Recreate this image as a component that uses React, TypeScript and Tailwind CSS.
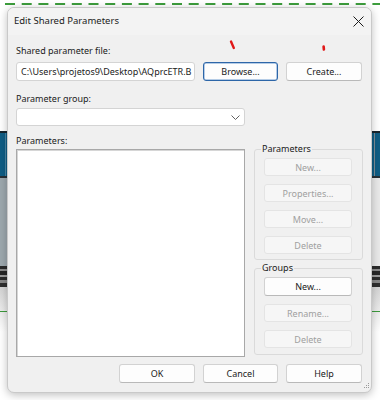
const font = "font-['Noto_Sans','Open_Sans',sans-serif]";

type BtnProps = { label: string; width: string; disabled?: boolean; primary?: boolean };

const Btn = ({ label, width, disabled, primary }: BtnProps) => (
  <button
    className={
      disabled
        ? `${width} h-[18px] shrink-0 rounded-[3px] border border-[#e4e4e4] bg-[#f6f6f6] text-[9px] leading-none text-[#a0a0a0]`
        : primary
          ? `${width} h-[19px] shrink-0 rounded-[3px] border border-[#2d66a8] bg-[#fdfdfd] text-[9px] leading-none text-[#1b1b1b] shadow-[inset_0_0_0_0.5px_#6f9bd0]`
          : `${width} h-[19px] shrink-0 rounded-[3px] border border-[#d2d2d2] border-b-[#b9b9b9] bg-[#fdfdfd] text-[9px] leading-none text-[#1b1b1b]`
    }
  >
    {label}
  </button>
);

const GroupBox = ({ title, children, className }: { title: string; children: React.ReactNode; className: string }) => (
  <fieldset className={`w-[109px] rounded-[3px] border border-[#dadada] ${className}`}>
    <legend className="-ml-[3px] px-[1px] text-[9px] leading-[12px] text-[#1b1b1b]">{title}</legend>
    {children}
  </fieldset>
);

export default function App() {
  return (
    <div className={`relative h-[400px] w-[380px] overflow-hidden bg-white ${font}`}>
      {/* canvas behind the dialog */}
      <div className="flex h-full flex-col">
        <div className="h-[3px]" />
        <svg width="380" height="2" className="block">
          <line x1="5" y1="1" x2="380" y2="1" stroke="#3d9d3d" strokeWidth="2" strokeDasharray="10 6.7" />
        </svg>
        <div className="h-[126px]" />
        <div className="h-[2px] bg-[#17252e]" />
        <div className="flex h-[43px] justify-between bg-[#0f5d84]">
          <div className="ml-[5px] w-[1px] bg-[#4a87a6]" />
          <div className="mr-[5px] w-[1px] bg-[#7d8d96]" />
        </div>
        <div className="h-[2px] bg-[#283036]" />
        <div className="flex h-[88px]">
          <div className="w-[190px] bg-[#9da8ae]" />
          <div className="flex-1 bg-[#e9e9e9]" />
        </div>
        <div className="h-[3px] bg-[#2a2a2a]" />
        <div className="h-[2px] bg-[#8a8a8a]" />
        <div className="h-[4px] bg-[#262626]" />
        <div className="h-[2px] bg-[#9c9c9c]" />
        <div className="h-[3px] bg-[#2c2c2c]" />
        <div className="h-[3px] bg-[#878787]" />
        <div className="h-[4px] bg-[#2e2e2e]" />
        <div className="h-[24px] bg-gradient-to-b from-[#d4d4d4] to-[#ececec]" />
        <div className="h-[1px] bg-[#3c9a3c]" />
        <div className="h-[20px] bg-gradient-to-b from-[#ececec] to-white" />
      </div>

      {/* dialog window */}
      <div className="absolute left-[7px] top-[7px] flex h-[386px] w-[365px] flex-col overflow-hidden rounded-[7px] border border-[#c9c9c9] bg-[#f0f0f0] shadow-[0_2px_8px_rgba(0,0,0,0.25)]">
        <div className="flex h-[27px] shrink-0 items-center justify-between bg-[#f3f3f3] pl-[6px] pr-[7px]">
          <span className="text-[9.5px] text-[#1b1b1b]">Edit Shared Parameters</span>
          <svg width="11" height="11" viewBox="0 0 11 11">
            <path d="M0.5 0.5 L10.5 10.5 M10.5 0.5 L0.5 10.5" stroke="#1b1b1b" strokeWidth="1" />
          </svg>
        </div>

        <div className="flex flex-col pl-[8px] text-[#1b1b1b]">
          <div className="mt-[10px] h-[12px] text-[9px] leading-[12px]">Shared parameter file:</div>
          <div className="mt-[5px] flex gap-[8px]">
            <div className="flex h-[19px] w-[179px] items-center overflow-hidden whitespace-nowrap rounded-[3px] border border-[#d4d4d4] bg-white pl-[4px] text-[9px]">
              C:\Users\projetos9\Desktop\AQprcETR.B
            </div>
            <Btn label="Browse..." width="w-[75px]" primary />
            <Btn label="Create..." width="w-[76px]" />
          </div>

          <div className="mt-[12px] h-[12px] text-[9px] leading-[12px]">Parameter group:</div>
          <div className="mt-[3px] flex h-[18px] w-[229px] items-center justify-end rounded-[3px] border border-[#d4d4d4] bg-white pr-[4px]">
            <svg width="9" height="5" viewBox="0 0 9 5">
              <path d="M0.5 0.5 L4.5 4.5 L8.5 0.5" fill="none" stroke="#606060" strokeWidth="1" />
            </svg>
          </div>

          <div className="mt-[9px] flex">
            <div className="flex w-[229px] flex-col">
              <div className="h-[12px] text-[9px] leading-[12px]">Parameters:</div>
              <div className="mt-[2px] h-[208px] border border-[#a8a8a8] bg-white shadow-[inset_1px_1px_0_#d6d6d6]" />
            </div>

            <div className="ml-[9px] flex flex-col">
              <GroupBox title="Parameters" className="mt-[8px] flex flex-col gap-[8px] pl-[9px] pt-[3px] pb-[5px]">
                <Btn label="New..." width="w-[88px]" disabled />
                <Btn label="Properties..." width="w-[88px]" disabled />
                <Btn label="Move..." width="w-[88px]" disabled />
                <Btn label="Delete" width="w-[88px]" disabled />
              </GroupBox>
              <GroupBox title="Groups" className="mt-[2px] flex flex-col gap-[8px] pl-[9px] pt-[3px] pb-[6px]">
                <Btn label="New..." width="w-[88px]" />
                <Btn label="Rename..." width="w-[88px]" disabled />
                <Btn label="Delete" width="w-[88px]" disabled />
              </GroupBox>
            </div>
          </div>

          <div className="mt-[7px] flex w-[346px] justify-end gap-[8px]">
            <Btn label="OK" width="w-[76px]" />
            <Btn label="Cancel" width="w-[75px]" />
            <Btn label="Help" width="w-[76px]" />
          </div>
        </div>

        <svg width="8" height="8" viewBox="0 0 8 8" className="absolute bottom-[1px] right-[1px]">
          <rect x="6" y="0" width="1" height="1" fill="#9a9a9a" />
          <rect x="4" y="2" width="1" height="1" fill="#9a9a9a" />
          <rect x="6" y="2" width="1" height="1" fill="#9a9a9a" />
          <rect x="2" y="4" width="1" height="1" fill="#9a9a9a" />
          <rect x="4" y="4" width="1" height="1" fill="#9a9a9a" />
          <rect x="6" y="4" width="1" height="1" fill="#9a9a9a" />
        </svg>
      </div>

      {/* red annotation marks */}
      <svg width="380" height="60" className="pointer-events-none absolute left-0 top-0">
        <path d="M231 41.5 L233.8 48" stroke="#e01818" strokeWidth="2.4" strokeLinecap="round" />
        <path d="M323.6 46.5 L323.9 49.5" stroke="#e01818" strokeWidth="2.6" strokeLinecap="round" />
      </svg>
    </div>
  );
}
